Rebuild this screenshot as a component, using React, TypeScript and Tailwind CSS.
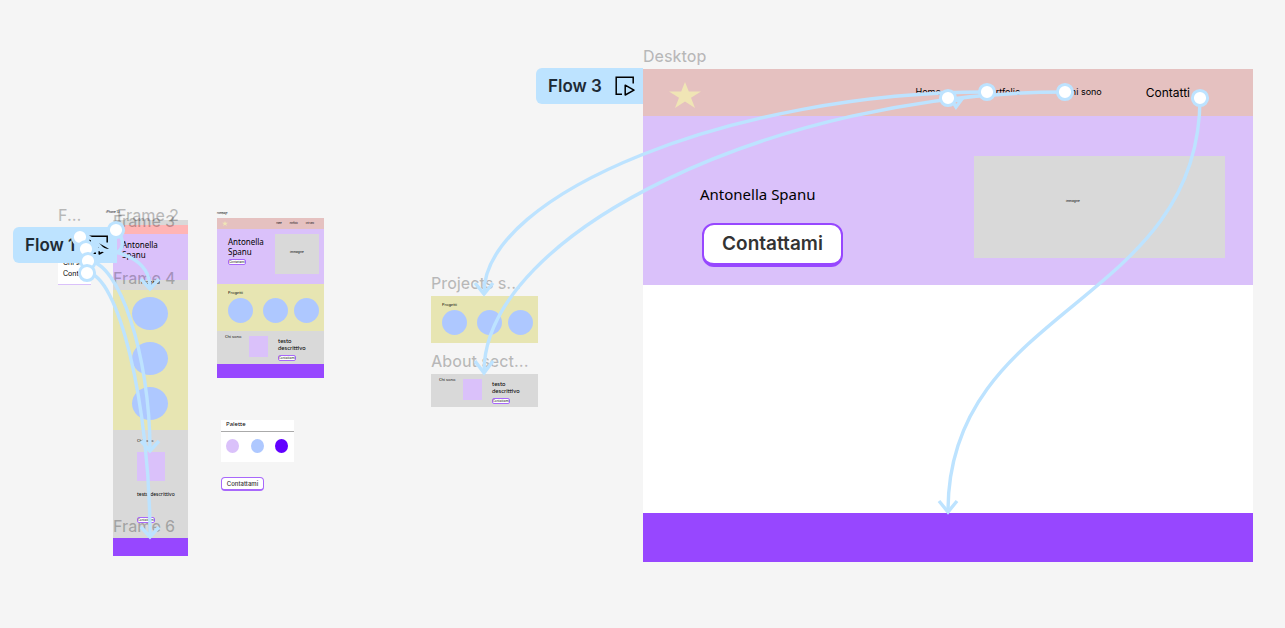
import type { ReactNode } from "react";

const NODES = [
  [116, 230],
  [80, 237],
  [86, 249],
  [88, 261],
  [87, 273],
  [948, 98],
  [987, 92],
  [1065, 92],
  [1200, 98],
];

const CONNECTORS = [
  "M987 92C736 92 484 193 484 293",
  "M1065 92C775 92 484 233 484 372",
  "M1200 98C1200 305 948 305 948 511",
  "M116 230C126 240 124 252 112 254",
  "M80 236C98 236 99 250 108 253",
  "M86 249C118 249 150 258 150 288",
  "M88 261C119 261 150 356 150 450",
  "M87 273C118 273 150 405 150 536",
];

const ARROWS = [
  "M475 283L484 294L493 283",
  "M475 361L484 373L493 361",
  "M939 501L948 512L957 501",
  "M141 279L150 289L159 279",
  "M141 441L150 451L159 441",
  "M141 527L150 537L159 527",
  "M951 99L956 107L962 99L953 101",
];

function FrameLabel({ place, children }: { place: string; children: ReactNode }) {
  return (
    <h2 className={`absolute whitespace-nowrap text-base leading-5 font-medium text-black/25 ${place}`}>
      {children}
    </h2>
  );
}

function FlowBadge({ place, children }: { place: string; children: ReactNode }) {
  return (
    <button
      type="button"
      className={`absolute flex h-9 items-center justify-between rounded-l-md bg-[#bde3ff] pr-2 pl-3 text-[17px] font-semibold text-[#1d2b36] ${place}`}
    >
      <span className="pt-px">{children}</span>
      <svg viewBox="0 0 20 20" className="size-5" fill="none" stroke="#000" strokeWidth="1.5" aria-hidden="true">
        <path d="M18.2 7.5V1.2H1.2V18.2H7" />
        <path d="M10.2 9.2V19L19 14.2Z" strokeLinejoin="round" />
      </svg>
    </button>
  );
}

function Star({ size }: { size: string }) {
  return (
    <svg viewBox="0 0 32 26" className={size} fill="#f0e5b5" aria-hidden="true">
      <path d="M16 0L19.8 9.6H32L22 15.8L26 26L16 19.4L6 26L10 15.8L0 9.6H12.2Z" />
    </svg>
  );
}

function TinyButton() {
  return (
    <button
      type="button"
      className="flex h-[6px] w-[18px] items-center justify-center rounded-[2px] border border-[#a868fb] bg-white text-[3px] leading-none font-medium text-[#333]"
    >
      Contattami
    </button>
  );
}

function ProjectsSection() {
  return (
    <section className="h-[47px] bg-[#e7e5b2] pt-[6px] pl-[11px] font-['Noto_Sans',sans-serif]">
      <h3 className="text-[4px] leading-[5px]">Progetti</h3>
      <div className="mt-[3px] flex gap-[10px]">
        <div className="size-[25px] rounded-full bg-[#aec8ff]" />
        <div className="size-[25px] rounded-full bg-[#aec8ff]" />
        <div className="-ml-[4px] size-[25px] rounded-full bg-[#aec8ff]" />
      </div>
    </section>
  );
}

function AboutSection() {
  return (
    <section className="flex h-[33px] bg-[#d9d9d9] pt-[3px] pl-2 font-['Noto_Sans',sans-serif]">
      <h3 className="w-6 text-[4px] leading-[5px]">Chi sono</h3>
      <div className="mt-[2px] h-[21px] w-[19px] bg-[#dac1fa]" />
      <div className="ml-[10px] pt-[3px]">
        <p className="w-8 font-['Lato',sans-serif] text-[6px] leading-[7px]">testo descrittivo</p>
        <div className="mt-1">
          <TinyButton />
        </div>
      </div>
    </section>
  );
}

function DesktopFrame() {
  return (
    <article className="absolute top-[69px] left-[643px] w-[610px] bg-white">
      <header className="flex h-[47px] items-center justify-between bg-[#e5c1c0] pr-[63px] pl-[26px]">
        <div className="pt-1">
          <Star size="h-[26px] w-8" />
        </div>
        <nav className="flex items-center gap-11 pb-px text-[9px]">
          <a href="#home">Home</a>
          <a href="#portfolio">Portfolio</a>
          <a href="#chi-sono">Chi sono</a>
          <a href="#contatti" className="pt-[2px] text-xs">
            Contatti
          </a>
        </nav>
      </header>
      <section className="flex h-[169px] items-start justify-between bg-[#dac1fa] pt-10 pr-7 pl-[57px]">
        <div className="pt-[26px]">
          <h1 className="font-['Noto_Sans',sans-serif] text-[15px] leading-6">Antonella Spanu</h1>
          <button
            type="button"
            className="mt-[17px] ml-[2px] flex h-11 w-[141px] items-center justify-center rounded-xl border-2 border-b-4 border-[#9747ff] bg-white text-[19px] font-semibold text-[#333]"
          >
            Contattami
          </button>
        </div>
        <div className="h-[102px] w-[251px] bg-[#d9d9d9] pt-[43px] pl-[92px] text-[3px] leading-[4px]">immagine</div>
      </section>
      <div className="h-[228px]" />
      <footer className="h-[49px] bg-[#9747ff]" />
    </article>
  );
}

function HomeFrame() {
  return (
    <article className="absolute top-[218px] left-[217px] w-[107px]">
      <header className="flex h-[11px] items-center justify-between bg-[#e5c1c0] pr-[10px] pl-[5px]">
        <Star size="h-[5px] w-[6px]" />
        <nav className="flex gap-2 text-[2px] leading-[3px]">
          <a href="#home">Home</a>
          <a href="#portfolio">Portfolio</a>
          <a href="#chi-sono">Chi sono</a>
        </nav>
      </header>
      <section className="flex h-[55px] justify-between bg-[#dac1fa] pt-[5px] pr-[5px] pl-[11px]">
        <div className="pt-[3px]">
          <h3 className="w-10 font-['Noto_Sans',sans-serif] text-[8px] leading-[10px]">Antonella Spanu</h3>
          <div className="mt-[2px]">
            <TinyButton />
          </div>
        </div>
        <div className="flex h-10 w-11 items-center justify-center bg-[#d9d9d9] pb-1 text-[3px]">immagine</div>
      </section>
      <ProjectsSection />
      <AboutSection />
      <footer className="h-[14px] bg-[#9747ff]" />
    </article>
  );
}

function MobileFrame() {
  return (
    <article className="absolute top-[220px] left-[113px] w-[75px] font-['Noto_Sans',sans-serif]">
      <div className="h-[5px] bg-[#d9d9d9]" />
      <header className="h-[9px] bg-[#ffb5b5]" />
      <section className="h-[46px] bg-[#dac1fa] pt-[6px] pl-[9px]">
        <h3 className="w-10 text-[8px] leading-[10px]">Antonella Spanu</h3>
      </section>
      <h3 className="h-[10px] bg-[#d9d9d9] text-center text-[5px] leading-[5px]">Progetti</h3>
      <section className="flex h-[140px] flex-col items-center gap-3 bg-[#e7e5b2] pt-[7px] pr-[2px]">
        <div className="h-[33px] w-9 rounded-[50%] bg-[#aec8ff]" />
        <div className="h-[33px] w-9 rounded-[50%] bg-[#aec8ff]" />
        <div className="h-[33px] w-9 rounded-[50%] bg-[#aec8ff]" />
      </section>
      <section className="h-[108px] bg-[#d9d9d9] pt-2 pl-6">
        <h3 className="text-[4px] leading-[5px]">Chi sono</h3>
        <div className="mt-[9px] h-[29px] w-7 bg-[#dac1fa]" />
        <p className="mt-[10px] text-[5px] leading-[7px] whitespace-nowrap">testo descrittivo</p>
        <div className="mt-[19px]">
          <TinyButton />
        </div>
      </section>
      <footer className="h-[18px] bg-[#9747ff]" />
    </article>
  );
}

function Connections() {
  return (
    <svg
      width="1285"
      height="628"
      viewBox="0 0 1285 628"
      className="pointer-events-none absolute top-0 left-0"
      fill="none"
      stroke="#bde3ff"
      strokeWidth="3.4"
      aria-hidden="true"
    >
      {[...CONNECTORS, ...ARROWS].map((d) => (
        <path key={d} d={d} />
      ))}
      {NODES.map(([x, y]) => (
        <circle key={`${x}-${y}`} cx={x} cy={y} r="7.6" fill="#fff" strokeWidth="3" />
      ))}
    </svg>
  );
}

export default function App() {
  return (
    <main className="relative min-h-screen overflow-hidden bg-[#f5f5f5] font-['Inter',sans-serif] text-black">
      <nav className="absolute top-[250px] left-[58px] flex h-[35px] w-[33px] flex-col justify-end gap-[2px] border-b border-[#dac1fa] bg-white pb-[6px] pl-[5px] text-[7px] leading-[9px] whitespace-nowrap">
        <a href="#chi-sono">Chi sono</a>
        <a href="#contatti">Contatti</a>
      </nav>
      <span className="absolute top-[210px] left-[106px] text-[3px] leading-[4px]">iPhone 13</span>
      <MobileFrame />
      <span className="absolute top-[212px] left-[217px] text-[2px] leading-[3px]">Homepage</span>
      <HomeFrame />

      <section className="absolute top-[420px] left-[221px] h-[42px] w-[73px] bg-white font-['Noto_Sans',sans-serif]">
        <h3 className="h-3 border-b border-[#aaa] pl-[5px] text-[6px] leading-[8px]">Palette</h3>
        <div className="flex justify-between pt-[7px] pr-[6px] pl-[5px]">
          <div className="h-[14px] w-[13px] rounded-[50%] bg-[#dac1fa]" />
          <div className="h-[14px] w-[13px] rounded-[50%] bg-[#aec8ff]" />
          <div className="h-[14px] w-[13px] rounded-[50%] bg-[#6200ff]" />
        </div>
      </section>
      <button
        type="button"
        className="absolute top-[477px] left-[221px] flex h-[14px] w-[43px] items-center justify-center rounded border border-b-2 border-[#a868fb] bg-white text-[6px] font-medium text-[#333]"
      >
        Contattami
      </button>

      <div className="absolute top-[296px] left-[431px] w-[107px]">
        <ProjectsSection />
      </div>
      <div className="absolute top-[374px] left-[431px] w-[107px]">
        <AboutSection />
      </div>
      <DesktopFrame />

      <FrameLabel place="top-[205px] left-[58px]">F...</FrameLabel>
      <FrameLabel place="top-[205px] left-[117px]">Frame 2</FrameLabel>
      <FrameLabel place="top-[211px] left-[113px]">Frame 3</FrameLabel>
      <FrameLabel place="top-[268px] left-[113px]">Frame 4</FrameLabel>
      <FrameLabel place="top-[516px] left-[113px]">Frame 6</FrameLabel>
      <FrameLabel place="top-[273px] left-[431px]">Projects s...</FrameLabel>
      <FrameLabel place="top-[351px] left-[431px]">About sect...</FrameLabel>
      <FrameLabel place="top-[46px] left-[643px]">Desktop</FrameLabel>

      <FlowBadge place="top-[227px] left-[13px] w-[104px]">Flow 1</FlowBadge>
      <FlowBadge place="top-[68px] left-[536px] w-[107px]">Flow 3</FlowBadge>
      <Connections />
    </main>
  );
}
